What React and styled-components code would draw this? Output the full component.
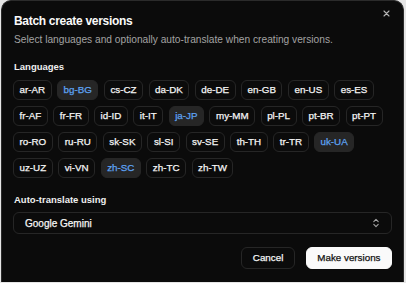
import React, { useState } from "react";
import styled, { createGlobalStyle } from "styled-components";

const GlobalStyle = createGlobalStyle`
  html, body {
    margin: 0;
    padding: 0;
    background: #e6e6e6;
  }
  body {
    font-family: "Liberation Sans", Arial, sans-serif;
    -webkit-font-smoothing: antialiased;
  }
  * { box-sizing: border-box; }
`;

const languageRows = [
  ["ar-AR", "bg-BG", "cs-CZ", "da-DK", "de-DE", "en-GB", "en-US", "es-ES"],
  ["fr-AF", "fr-FR", "id-ID", "it-IT", "ja-JP", "my-MM", "pl-PL", "pt-BR", "pt-PT"],
  ["ro-RO", "ru-RU", "sk-SK", "sl-SI", "sv-SE", "th-TH", "tr-TR", "uk-UA"],
  ["uz-UZ", "vi-VN", "zh-SC", "zh-TC", "zh-TW"],
];

const Dialog = styled.div`
  position: relative;
  margin-left: 1px;
  width: 403px;
  height: 282px;
  background: #0b0b0b;
  border: 1px solid #2b2b2b;
  border-bottom: none;
  border-radius: 10px 10px 0 0;
  padding: 12px 11px 0 11px;
  display: flex;
  flex-direction: column;
  color: #f5f5f5;
`;

const Header = styled.div`
  display: flex;
  flex-direction: column;
  gap: 3.5px;
  padding-left: 1px;
`;

const Title = styled.h2`
  margin: 0;
  font-size: 12px;
  line-height: 16px;
  font-weight: 700;
  letter-spacing: -0.3px;
  color: #fafafa;
`;

const Subtitle = styled.p`
  margin: 0;
  font-size: 10.2px;
  line-height: 13px;
  color: #a3a3a3;
`;

const CloseButton = styled.button`
  position: absolute;
  top: 5px;
  right: 10px;
  width: 14px;
  height: 14px;
  padding: 0;
  border: none;
  background: none;
  color: #b5b5b5;
  display: flex;
  align-items: center;
  justify-content: center;
  cursor: pointer;
`;

const Section = styled.div`
  display: flex;
  flex-direction: column;
  gap: ${(p) => p.$gap}px;
  margin-top: ${(p) => p.$top}px;
`;

const Label = styled.div`
  font-size: 9.5px;
  line-height: 13px;
  font-weight: 700;
  color: #f0f0f0;
  padding-left: 1px;
`;

const ChipGrid = styled.div`
  display: flex;
  flex-direction: column;
  gap: 6px;
`;

const ChipRow = styled.div`
  display: flex;
  gap: 5.5px;
`;

const Chip = styled.button`
  flex-shrink: 0;
  margin: 0;
  height: 20px;
  padding: 0 5.5px;
  border-radius: 6px;
  font-family: inherit;
  font-size: 9.8px;
  font-weight: 400;
  line-height: 1;
  white-space: nowrap;
  -webkit-text-stroke: 0.25px currentColor;
  border: 1px solid #262626;
  background: ${(p) => (p.$selected ? "#262626" : "transparent")};
  color: ${(p) => (p.$selected ? "#5ea3f2" : "#f5f5f5")};
  cursor: pointer;
`;

const Select = styled.div`
  height: 22px;
  border: 1px solid #262626;
  border-radius: 6px;
  display: flex;
  align-items: center;
  justify-content: space-between;
  padding: 0 11px;
  font-size: 10px;
  color: #f5f5f5;
  -webkit-text-stroke: 0.25px currentColor;
`;

const Footer = styled.div`
  display: flex;
  justify-content: flex-end;
  gap: 11px;
  margin-top: 12.5px;
`;

const Button = styled.button`
  margin: 0;
  height: 22px;
  padding: 0 10.5px;
  border-radius: 6px;
  font-family: inherit;
  font-size: 9.8px;
  white-space: nowrap;
  -webkit-text-stroke: 0.25px currentColor;
  border: 1px solid ${(p) => (p.$primary ? "#fafafa" : "#262626")};
  background: ${(p) => (p.$primary ? "#fafafa" : "transparent")};
  color: ${(p) => (p.$primary ? "#111" : "#f5f5f5")};
  cursor: pointer;
`;

function UpDown() {
  return (
    <svg width="8" height="10" viewBox="0 0 8 10" fill="none" stroke="#a3a3a3" strokeWidth="1.1" strokeLinecap="round" strokeLinejoin="round">
      <path d="M1.8 3.6 L4 1.4 L6.2 3.6" />
      <path d="M1.8 6.4 L4 8.6 L6.2 6.4" />
    </svg>
  );
}

export default function App() {
  const [selected, setSelected] = useState(["bg-BG", "ja-JP", "uk-UA", "zh-SC"]);
  const toggle = (l) =>
    setSelected((s) => (s.includes(l) ? s.filter((x) => x !== l) : [...s, l]));

  return (
    <>
      <GlobalStyle />
      <Dialog>
        <CloseButton aria-label="Close">
          <svg width="7" height="7" viewBox="0 0 7 7" stroke="currentColor" strokeWidth="1.1" strokeLinecap="round">
            <path d="M1 1 L6 6 M6 1 L1 6" />
          </svg>
        </CloseButton>
        <Header>
          <Title>Batch create versions</Title>
          <Subtitle>Select languages and optionally auto-translate when creating versions.</Subtitle>
        </Header>

        <Section $top={14.5} $gap={7}>
          <Label>Languages</Label>
          <ChipGrid>
            {languageRows.map((row, i) => (
              <ChipRow key={i}>
                {row.map((l) => (
                  <Chip key={l} $selected={selected.includes(l)} onClick={() => toggle(l)}>
                    {l}
                  </Chip>
                ))}
              </ChipRow>
            ))}
          </ChipGrid>
        </Section>

        <Section $top={14.5} $gap={6.5}>
          <Label>Auto-translate using</Label>
          <Select>
            <span>Google Gemini</span>
            <UpDown />
          </Select>
        </Section>

        <Footer>
          <Button>Cancel</Button>
          <Button $primary>Make versions</Button>
        </Footer>
      </Dialog>
    </>
  );
}
